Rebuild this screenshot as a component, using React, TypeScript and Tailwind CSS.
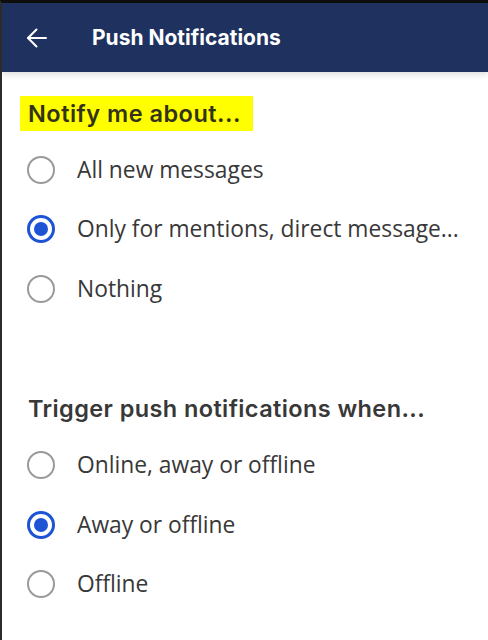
import { useState } from "react"

const headingFont = { fontFamily: "Inter, 'Noto Sans', sans-serif" }
const bodyFont = { fontFamily: "'Open Sans', 'Noto Sans', sans-serif" }

interface RadioGroupProps {
  options: string[]
  value: number
  onChange: (i: number) => void
}

function RadioGroup({ options, value, onChange }: RadioGroupProps) {
  return (
    <div className="mt-[9px]">
      {options.map((label, i) => {
        const checked = i === value
        return (
          <button
            key={label}
            onClick={() => onChange(i)}
            className="flex h-[59.5px] w-full items-center text-left"
          >
            <span className="ml-[25px] flex h-[28px] w-[28px] shrink-0 items-center justify-center">
              {checked ? (
                <span className="flex h-[28px] w-[28px] items-center justify-center rounded-full border-[3px] border-[#1c54d4]">
                  <span className="h-[14px] w-[14px] rounded-full bg-[#1c54d4]" />
                </span>
              ) : (
                <span className="h-[28px] w-[28px] rounded-full border-2 border-[#9a9a9a]" />
              )}
            </span>
            <span
              className="ml-[22px] whitespace-nowrap text-[22.8px] text-[#383838]"
              style={bodyFont}
            >
              {label}
            </span>
          </button>
        )
      })}
    </div>
  )
}

export default function App() {
  const [notify, setNotify] = useState(1)
  const [trigger, setTrigger] = useState(1)

  return (
    <div className="flex h-[640px] flex-col overflow-hidden border-l-2 border-t-[3px] border-l-[#2b2b2b] border-t-[#0d0d0d] bg-white">
      <header className="relative z-10 flex h-[69px] shrink-0 items-center bg-[#1f325f] shadow-[0_3px_6px_rgba(0,0,0,0.12)]">
        <svg
          width="22"
          height="22"
          viewBox="0 0 22 22"
          fill="none"
          stroke="white"
          strokeWidth="2"
          strokeLinecap="round"
          strokeLinejoin="round"
          className="ml-[24px]"
        >
          <path d="M20 11H2" />
          <path d="M10.5 2.5 2 11l8.5 8.5" />
        </svg>
        <h1
          className="ml-[44px] text-[21px] font-bold text-white"
          style={headingFont}
        >
          Push Notifications
        </h1>
      </header>

      <main className="pt-6">
        <section>
          <div className="ml-[18px] inline-flex h-[35px] items-center bg-[#ffff00] pl-2 pr-[12px]">
            <h2
              className="text-[23.5px] font-semibold tracking-[0.5px] text-[#33331a]"
              style={headingFont}
            >
              Notify me about...
            </h2>
          </div>
          <RadioGroup
            options={[
              "All new messages",
              "Only for mentions, direct message...",
              "Nothing",
            ]}
            value={notify}
            onChange={setNotify}
          />
        </section>

        <section className="mt-[73px]">
          <div className="ml-[26px] flex h-[35px] items-center">
            <h2
              className="text-[23.5px] font-semibold tracking-[0.4px] text-[#383838]"
              style={headingFont}
            >
              Trigger push notifications when...
            </h2>
          </div>
          <RadioGroup
            options={["Online, away or offline", "Away or offline", "Offline"]}
            value={trigger}
            onChange={setTrigger}
          />
        </section>
      </main>
    </div>
  )
}
